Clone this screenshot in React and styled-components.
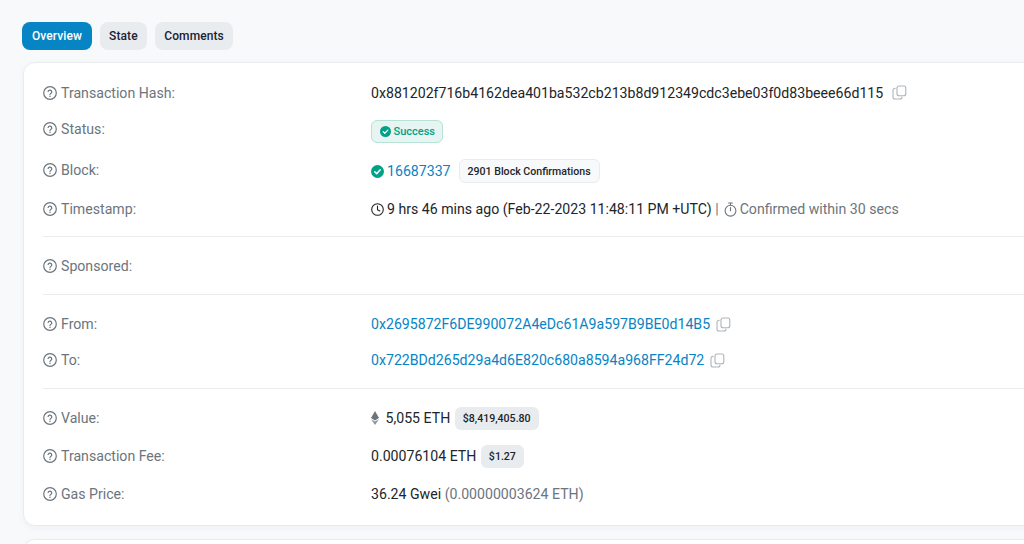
import React from "react";
import styled, { createGlobalStyle } from "styled-components";

const GlobalStyle = createGlobalStyle`
  html, body {
    margin: 0;
    height: 544px;
    overflow: hidden;
    background: #f8f9fb;
    font-family: Roboto, "Liberation Sans", sans-serif;
    -webkit-font-smoothing: antialiased;
  }
`;

const Page = styled.div`
  width: 1024px;
  height: 544px;
  overflow: hidden;
  box-sizing: border-box;
  padding: 22px 0 0 22px;
`;

const Tabs = styled.div`
  display: flex;
  gap: 7.5px;
  margin-bottom: 12px;
`;

const Tab = styled.div`
  height: 28px;
  padding: 0 ${(p) => p.$pad || 9.5}px;
  border-radius: 8px;
  display: flex;
  align-items: center;
  font-size: 12px;
  font-weight: 500;
  letter-spacing: 0.1px;
  background: ${(p) => (p.$active ? "#0784c3" : "#e9ecef")};
  color: ${(p) => (p.$active ? "#fff" : "#1b2234")};
`;

const Card = styled.div`
  width: 1040px;
  height: 464px;
  margin-left: 1px;
  box-sizing: border-box;
  background: #fff;
  border: 1px solid #e9ecef;
  border-radius: 12px;
  padding: 11px 19px 0;
  box-shadow: 0 2px 6px rgba(189, 197, 209, 0.15);
`;

const NextCard = styled(Card)`
  height: 40px;
  margin-top: 13px;
  padding: 0;
`;

const Row = styled.div`
  display: grid;
  grid-template-columns: 328px 1fr;
  align-items: center;
  height: ${(p) => p.$h}px;
`;

const Label = styled.div`
  display: flex;
  align-items: center;
  gap: 4px;
  color: #6c757d;
  font-size: 14.13px;
  margin-top: ${(p) => p.$up || 0}px;
`;

const Value = styled.div`
  display: flex;
  align-items: center;
  color: #212529;
  font-size: 14.13px;
  white-space: nowrap;
`;

const Divider = styled.div`
  height: 1px;
  background: #e9ecef;
  margin-top: ${(p) => p.$top}px;
  margin-bottom: ${(p) => p.$bottom}px;
`;

const Address = styled.span`
  color: #0784c3;
`;

const Muted = styled.span`
  color: #6c757d;
`;

const SuccessBadge = styled.div`
  display: flex;
  align-items: center;
  gap: 3px;
  height: 23px;
  padding: 0 7.5px;
  border: 1px solid #b5e3d6;
  border-radius: 6px;
  background: #e6f5f1;
  color: #00a186;
  font-size: 11px;
  font-weight: 500;
  box-sizing: border-box;
`;

const Pill = styled.div`
  display: flex;
  align-items: center;
  box-sizing: border-box;
  height: ${(p) => p.$h || 23}px;
  padding: 0 8px;
  margin-left: ${(p) => p.$left || 4.5}px;
  border-radius: 6px;
  font-size: 10.6px;
  font-weight: 500;
  color: #212529;
  background: ${(p) => (p.$outlined ? "#f8f9fa" : "#e9ecef")};
  border: ${(p) => (p.$outlined ? "1px solid #e9ecef" : "none")};
`;

const IconBox = styled.svg`
  flex: none;
  display: block;
  margin-left: ${(p) => p.$left || 0}px;
  margin-right: ${(p) => p.$right || 0}px;
`;

const HelpIcon = () => (
  <IconBox width="14" height="14" viewBox="0 0 14 14" fill="none" stroke="#6c757d">
    <circle cx="7" cy="7" r="6.3" strokeWidth="1.2" />
    <path d="M5.1 5.5a1.9 1.9 0 0 1 3.7.5c0 1.2-1.8 1.5-1.8 2.4" strokeWidth="1.2" strokeLinecap="round" />
    <circle cx="7" cy="10.3" r="0.75" fill="#6c757d" stroke="none" />
  </IconBox>
);

const CopyIcon = ({ left }) => (
  <IconBox $left={left} width="15" height="15" viewBox="0 0 15 15" fill="none" stroke="#adb5bd" strokeWidth="1.1">
    <rect x="5" y="1" width="8.8" height="9.8" rx="2" />
    <path d="M3.1 3.4A2 2 0 0 0 1 5.4v6.6a2 2 0 0 0 2 2h5a2 2 0 0 0 2-2" strokeLinecap="round" />
  </IconBox>
);

const CheckCircle = ({ size, right }) => (
  <IconBox $right={right} width={size} height={size} viewBox="0 0 14 14">
    <circle cx="7" cy="7" r="7" fill="#00a186" />
    <path d="M4 7.2l2.1 2.1L10 5.2" fill="none" stroke="#fff" strokeWidth="1.6" strokeLinecap="round" strokeLinejoin="round" />
  </IconBox>
);

const ClockIcon = () => (
  <IconBox $right={3} width="13" height="13" viewBox="0 0 13 13" fill="none" stroke="#212529" strokeWidth="1.1">
    <circle cx="6.5" cy="6.5" r="5.8" />
    <path d="M6.5 3v3.7l2.3 1.3" strokeLinecap="round" strokeLinejoin="round" />
  </IconBox>
);

const StopwatchIcon = () => (
  <IconBox $left={5} $right={3} width="13" height="15" viewBox="0 0 13 15" fill="none" stroke="#6c757d" strokeWidth="1.1">
    <circle cx="6.5" cy="8.7" r="5.4" />
    <path d="M4.6 1h3.8M6.5 1v2.3M6.5 5.6v3.2" strokeLinecap="round" />
  </IconBox>
);

const EthIcon = () => (
  <IconBox $right={6.5} width="8" height="14" viewBox="0 0 8 14">
    <path d="M4 0L0 7l4 2.4L8 7z" fill="#6c757d" />
    <path d="M0 8.2L4 14l4-5.8-4 2.4z" fill="#8c959d" />
  </IconBox>
);

const Field = ({ label, up, h, children }) => (
  <Row $h={h}>
    <Label $up={up}>
      <HelpIcon />
      {label}
    </Label>
    <Value>{children}</Value>
  </Row>
);

export default function App() {
  return (
    <Page>
      <GlobalStyle />
      <Tabs>
        <Tab $active $pad={10}>Overview</Tab>
        <Tab>State</Tab>
        <Tab>Comments</Tab>
      </Tabs>
      <Card>
        <Field label="Transaction Hash:" h={37}>
          0x881202f716b4162dea401ba532cb213b8d912349cdc3ebe03f0d83beee66d115
          <CopyIcon left={9} />
        </Field>
        <Field label="Status:" h={41} up={-6}>
          <SuccessBadge>
            <CheckCircle size={11} />
            Success
          </SuccessBadge>
        </Field>
        <Field label="Block:" h={38} up={-2}>
          <CheckCircle size={13} right={3} />
          <Address>16687337</Address>
          <Pill $outlined $h={24} $left={8}>2901 Block Confirmations</Pill>
        </Field>
        <Field label="Timestamp:" h={38}>
          <ClockIcon />
          9 hrs 46 mins ago (Feb-22-2023 11:48:11 PM +UTC)
          <Muted>&nbsp;|</Muted>
          <StopwatchIcon />
          <Muted>Confirmed within 30 secs</Muted>
        </Field>
        <Divider $top={8} $bottom={11} />
        <Field label="Sponsored:" h={36} />
        <Divider $top={10} $bottom={11} />
        <Field label="From:" h={36}>
          <Address>0x2695872F6DE990072A4eDc61A9a597B9BE0d14B5</Address>
          <CopyIcon left={5.5} />
        </Field>
        <Field label="To:" h={36}>
          <Address>0x722BDd265d29a4d6E820c680a8594a968FF24d72</Address>
          <CopyIcon left={5.5} />
        </Field>
        <Divider $top={10} $bottom={10} />
        <Field label="Value:" h={38}>
          <EthIcon />
          5,055 ETH
          <Pill>$8,419,405.80</Pill>
        </Field>
        <Field label="Transaction Fee:" h={38.5}>
          0.00076104 ETH
          <Pill>$1.27</Pill>
        </Field>
        <Field label="Gas Price:" h={37}>
          36.24 Gwei&nbsp;<Muted>(0.00000003624 ETH)</Muted>
        </Field>
      </Card>
      <NextCard />
    </Page>
  );
}
